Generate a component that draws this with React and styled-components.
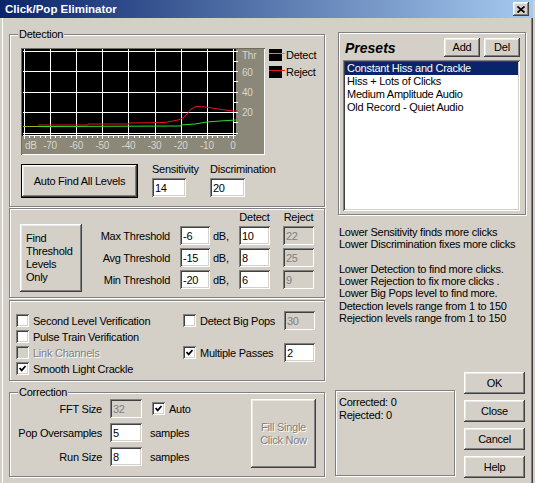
import React from "react"
import styled, { createGlobalStyle, css } from "styled-components"

const FACE = "#d4d0c8"

const GlobalStyle = createGlobalStyle`
  html, body {
    margin: 0;
    padding: 0;
    background: ${FACE};
  }
  body {
    font-family: "Liberation Sans", Arial, sans-serif;
    font-size: 11px;
    letter-spacing: -0.25px;
    color: #000;
  }
`

const raised = css`
  background: ${FACE};
  box-shadow: inset -1px -1px 0 #404040, inset 1px 1px 0 #fff,
    inset -2px -2px 0 #808080, inset 2px 2px 0 #ebe9e4;
`

const sunken = css`
  box-shadow: inset 1px 1px 0 #808080, inset -1px -1px 0 #fff,
    inset 2px 2px 0 #404040, inset -2px -2px 0 ${FACE};
`

const etched = css`
  border: 1px solid #808080;
  box-shadow: inset 1px 1px 0 #fff, 1px 1px 0 #fff;
`

const disabledText = css`
  color: #808080;
  text-shadow: 1px 1px 0 #fff;
`

const Window = styled.div`
  width: 533px;
  height: 483px;
  display: flex;
  flex-direction: column;
  background: ${FACE};
  box-shadow: inset -1px 0 0 #404040, inset -2px 0 0 #808080;
  overflow: hidden;
`

const TitleBar = styled.div`
  height: 18px;
  flex: none;
  display: flex;
  align-items: center;
  justify-content: space-between;
  padding: 0 4px 0 5px;
  background: linear-gradient(90deg, #0a246a, #a6caf0);
  color: #fff;
  font-weight: bold;
  font-size: 11.5px;
  letter-spacing: 0;
`

const CloseButton = styled.button`
  width: 16px;
  height: 14px;
  padding: 0;
  border: none;
  display: flex;
  align-items: center;
  justify-content: center;
  ${raised}
`

const Body = styled.div`
  flex: 1;
  display: flex;
  gap: 9px;
  margin-left: 2px;
  padding-left: 6px;
  border-left: 1px solid #fff;
`

const LeftCol = styled.div`
  width: 317px;
  display: flex;
  flex-direction: column;
`

const RightCol = styled.div`
  width: 192px;
  display: flex;
  flex-direction: column;
  padding-bottom: 5px;
`

const Group = styled.div`
  position: relative;
  box-sizing: border-box;
  width: 316px;
  height: ${p => p.$h}px;
  margin-top: ${p => p.$top}px;
  padding: ${p => p.$pad || 0};
  ${etched}
`

const Caption = styled.span`
  position: absolute;
  top: -7px;
  left: 8px;
  padding: 0 1px;
  line-height: 13px;
  background: ${FACE};
`

const GraphRow = styled.div`
  display: flex;
  gap: 4px;
`

const Legend = styled.div`
  display: flex;
  flex-direction: column;
  gap: 5px;
  margin-top: 1px;
`

const LegendItem = styled.div`
  display: flex;
  align-items: center;
  gap: 1px;
  height: 12px;
`

const ControlRow = styled.div`
  display: flex;
  align-items: flex-start;
  margin-top: 9px;
`

const Button = styled.button`
  box-sizing: border-box;
  width: ${p => p.$w}px;
  height: ${p => p.$h}px;
  padding: 0;
  border: none;
  font: inherit;
  letter-spacing: inherit;
  color: #000;
  line-height: 13px;
  ${raised}
  &:disabled {
    ${disabledText}
  }
`

const DefaultButton = styled(Button)`
  border: 1px solid #000;
  margin-right: 14px;
`

const FindButton = styled(Button)`
  margin-top: 15px;
  text-align: left;
  padding-left: 6px;
`

const Field = styled.div`
  display: flex;
  flex-direction: column;
  gap: 2px;
  width: ${p => (p.$w ? `${p.$w}px` : "auto")};
  margin-top: -1px;
  line-height: 13px;
`

const Input = styled.input`
  box-sizing: border-box;
  width: ${p => p.$w || 31}px;
  height: 19px;
  margin: 0;
  padding: 0 0 0 3px;
  border: none;
  outline: none;
  font: inherit;
  letter-spacing: inherit;
  color: #000;
  background: #fff;
  ${sunken}
  &:disabled {
    background: ${FACE};
    color: #808080;
  }
`

const ThresholdGrid = styled.div`
  display: grid;
  grid-template-columns: 98px 30px 29px 31px 44px;
  grid-template-rows: 13px repeat(3, 19px);
  row-gap: 3px;
  align-items: center;
  margin-top: 1px;
`

const ColHead = styled.span`
  text-align: center;
  grid-column: ${p => p.$col};
  justify-self: ${p => (p.$col === 5 ? "end" : "stretch")};
  width: ${p => (p.$col === 5 ? "31px" : "auto")};
`

const RowLabel = styled.span`
  text-align: right;
  padding-right: 10px;
`

const Unit = styled.span`
  padding-left: 3px;
`

const RejectCell = styled.div`
  justify-self: end;
`

const OptionsGrid = styled.div`
  display: grid;
  grid-template-columns: 167px 132px;
  grid-auto-rows: 13px;
  row-gap: 3px;
  align-items: center;
`

const CheckRow = styled.label`
  display: flex;
  align-items: center;
  gap: 4px;
  height: 13px;
  ${p => p.$disabled && disabledText}
`

const BoxMark = styled.span`
  box-sizing: border-box;
  width: 13px;
  height: 13px;
  flex: none;
  display: inline-flex;
  align-items: center;
  justify-content: center;
  background: ${p => (p.$disabled ? FACE : "#fff")};
  ${sunken}
`

const Trailing = styled.span`
  margin-left: auto;
  display: flex;
`

const CorrRow = styled.div`
  display: flex;
  align-items: flex-start;
`

const CorrGrid = styled.div`
  display: grid;
  grid-template-columns: 92px 32px auto;
  grid-auto-rows: 19px;
  column-gap: 8px;
  row-gap: 5px;
  align-items: center;
`

const AutoCheck = styled(CheckRow)`
  margin-left: 2px;
`

const FillButton = styled(Button)`
  margin-left: auto;
  text-align: center;
`

const PresetsBox = styled.div`
  box-sizing: border-box;
  width: 188px;
  height: 183px;
  margin: 14px 0 0 3px;
  padding: 5px 5px 0 4px;
  ${etched}
`

const PresetsHead = styled.div`
  display: flex;
  align-items: center;
  gap: 4px;
  height: 19px;
`

const PresetsTitle = styled.span`
  margin-left: 2px;
  margin-right: auto;
  font-size: 14px;
  font-weight: bold;
  font-style: italic;
  letter-spacing: 0;
`

const ListBox = styled.div`
  box-sizing: border-box;
  height: 151px;
  margin-top: 3px;
  padding: 2px;
  background: #fff;
  ${sunken}
`

const ListItem = styled.div`
  height: 13px;
  line-height: 13px;
  padding-left: 2px;
  white-space: nowrap;
  background: ${p => (p.$selected ? "#0a246a" : "transparent")};
  color: ${p => (p.$selected ? "#fff" : "#000")};
`

const HelpText = styled.div`
  margin-top: 11px;
  padding-left: 4px;
  line-height: 12.3px;
  white-space: nowrap;
`

const BottomRow = styled.div`
  margin-top: auto;
  display: flex;
  align-items: flex-end;
`

const StatusBox = styled.div`
  box-sizing: border-box;
  width: 120px;
  height: 86px;
  margin-bottom: 2px;
  padding: 5px 3px;
  line-height: 13px;
  ${etched}
`

const ButtonStack = styled.div`
  display: flex;
  flex-direction: column;
  gap: 6px;
  margin-left: 9px;
`

// chart scales: dB along x, threshold along y (coords relative to the frame)
const X = db => 29 + (db + 70) * 2.614
const Y = t => 84.5 - t * 1.025

const Chart = () => {
  const dbTicks = [-70, -60, -50, -40, -30, -20, -10, 0]
  const minor = []
  for (let d = -80; d <= 0; d += 2) minor.push(d)
  const green = "2,78.5 17,78.5"
  const greenLine = "17,78.5 160,78 160,77 174,76 186,74 199,73 215,72"
  const redLine =
    "17,77 67,77 67,76 108,76 108,75 144,74.5 157,72 162,70 166,66 170,61 175,58.5 185,59 201,61.5 212,63 217,63"
  return (
    <svg width="244" height="107" viewBox="0 0 244 107" style={{ flex: "none" }}>
      <rect x="0" y="0" width="244" height="107" fill="#8b887a" />
      <path d="M0 106.5H244M243.5 0V107" stroke="#fff" />
      <path d="M0 0.5H244M0.5 0V107" stroke="#6f6c60" />
      <rect x="1" y="1" width="214" height="87" fill="#000" />
      {[0, 20, 40, 60, 80].map(t => (
        <path key={t} d={`M2 ${Math.round(Y(t)) + 0.5}H217`} stroke="#fff" />
      ))}
      {[-80, ...dbTicks].map(d => (
        <path key={d} d={`M${Math.round(X(d)) + 0.5} 1V88`} stroke="#fff" />
      ))}
      <path d="M2 87.5H215" stroke="#fff" />
      {minor.map(d => (
        <path key={d} d={`M${Math.round(X(d)) + 0.5} 87V${d % 10 === 0 ? 91 : 90}`} stroke="#fff" />
      ))}
      {[0, 10, 20, 30, 40, 50, 60, 70, 80].map(t => (
        <path key={t} d={`M213 ${Math.round(Y(t)) + 0.5}H217`} stroke="#fff" />
      ))}
      <g fontFamily="Liberation Sans, Arial, sans-serif" fontSize="10" fill="#d8d5cc">
        <text x="221" y="11">Thr</text>
        <text x="221" y="28">60</text>
        <text x="221" y="48">40</text>
        <text x="221" y="68">20</text>
        <text x="4" y="101">dB</text>
        {dbTicks.map(d => (
          <text key={d} x={X(d)} y="101" textAnchor="middle">
            {d}
          </text>
        ))}
      </g>
      <polyline points={green} fill="none" stroke="#b0a820" />
      <polyline points={greenLine} fill="none" stroke="#2ee02e" />
      <polyline points={redLine} fill="none" stroke="#e8102a" />
    </svg>
  )
}

const Swatch = ({ color }) => (
  <svg width="16" height="12" viewBox="0 0 16 12">
    <rect x="0" y="0" width="13" height="12" fill="#000" />
    <path d="M0 4.5H16" stroke={color} />
  </svg>
)

const Check = ({ on, disabled, children, as }) => (
  <CheckRow $disabled={disabled} as={as}>
    <BoxMark $disabled={disabled}>
      {on && (
        <svg width="7" height="7" viewBox="0 0 7 7">
          <path d="M0.5 3L2.7 5.3L6.5 1" fill="none" stroke="#000" strokeWidth="1.8" />
        </svg>
      )}
    </BoxMark>
    {children}
  </CheckRow>
)

const thresholds = [
  { label: "Max Threshold", db: "-6", detect: "10", reject: "22" },
  { label: "Avg Threshold", db: "-15", detect: "8", reject: "25" },
  { label: "Min Threshold", db: "-20", detect: "6", reject: "9" },
]

const presets = [
  "Constant Hiss and Crackle",
  "Hiss + Lots of Clicks",
  "Medium Amplitude Audio",
  "Old Record - Quiet Audio",
]

const help = [
  "Lower Sensitivity finds more clicks",
  "Lower Discrimination fixes more clicks",
  "",
  "Lower Detection to find more clicks.",
  "Lower Rejection to fix more clicks .",
  "Lower Big Pops level to find more.",
  "Detection levels range from 1 to 150",
  "Rejection levels range from 1 to 150",
]

export default function App() {
  return (
    <>
      <GlobalStyle />
      <Window>
        <TitleBar>
          <span>Click/Pop Eliminator</span>
          <CloseButton aria-label="Close">
            <svg width="8" height="7" viewBox="0 0 8 7">
              <path d="M0.5 0.5L7.5 6.5M7.5 0.5L0.5 6.5" stroke="#000" strokeWidth="1.7" />
            </svg>
          </CloseButton>
        </TitleBar>
        <Body>
          <LeftCol>
            <Group $top={16} $h={173} $pad="13px 0 0 11px">
              <Caption>Detection</Caption>
              <GraphRow>
                <Chart />
                <Legend>
                  <LegendItem>
                    <Swatch color="#2ee02e" />
                    Detect
                  </LegendItem>
                  <LegendItem>
                    <Swatch color="#e8102a" />
                    Reject
                  </LegendItem>
                </Legend>
              </GraphRow>
              <ControlRow>
                <DefaultButton $w={117} $h={34}>Auto Find All Levels</DefaultButton>
                <Field $w={58}>
                  Sensitivity
                  <Input $w={34} defaultValue="14" />
                </Field>
                <Field>
                  Discrimination
                  <Input $w={35} defaultValue="20" />
                </Field>
              </ControlRow>
            </Group>

            <Group $top={1} $h={90} $pad="0 0 0 10px">
              <CorrRow>
                <FindButton $w={62} $h={68}>
                  Find
                  <br />
                  Threshold
                  <br />
                  Levels
                  <br />
                  Only
                </FindButton>
                <ThresholdGrid>
                  <ColHead $col={4}>Detect</ColHead>
                  <ColHead $col={5}>Reject</ColHead>
                  {thresholds.map(t => (
                    <React.Fragment key={t.label}>
                      <RowLabel>{t.label}</RowLabel>
                      <Input $w={30} defaultValue={t.db} />
                      <Unit>dB,</Unit>
                      <Input $w={31} defaultValue={t.detect} />
                      <RejectCell>
                        <Input $w={31} defaultValue={t.reject} disabled />
                      </RejectCell>
                    </React.Fragment>
                  ))}
                </ThresholdGrid>
              </CorrRow>
            </Group>

            <Group $top={2} $h={81} $pad="13px 0 0 6px">
              <OptionsGrid>
                <Check>Second Level Verification</Check>
                <Check>
                  Detect Big Pops
                  <Trailing>
                    <Input $w={31} defaultValue="30" disabled />
                  </Trailing>
                </Check>
                <Check>Pulse Train Verification</Check>
                <span />
                <Check disabled>Link Channels</Check>
                <Check on>
                  Multiple Passes
                  <Trailing>
                    <Input $w={31} defaultValue="2" />
                  </Trailing>
                </Check>
                <Check on>Smooth Light Crackle</Check>
                <span />
              </OptionsGrid>
            </Group>

            <Group $top={11} $h={85} $pad="6px 8px 0 0">
              <Caption>Correction</Caption>
              <CorrRow>
                <CorrGrid>
                  <RowLabel as="span" style={{ paddingRight: 0 }}>FFT Size</RowLabel>
                  <Input $w={32} defaultValue="32" disabled />
                  <AutoCheck as="div">
                    <BoxMark>
                      <svg width="7" height="7" viewBox="0 0 7 7">
                        <path d="M0.5 3L2.7 5.3L6.5 1" fill="none" stroke="#000" strokeWidth="1.8" />
                      </svg>
                    </BoxMark>
                    Auto
                  </AutoCheck>
                  <RowLabel as="span" style={{ paddingRight: 0 }}>Pop Oversamples</RowLabel>
                  <Input $w={32} defaultValue="5" />
                  <span>samples</span>
                  <RowLabel as="span" style={{ paddingRight: 0 }}>Run Size</RowLabel>
                  <Input $w={32} defaultValue="8" />
                  <span>samples</span>
                </CorrGrid>
                <FillButton $w={65} $h={69} disabled>
                  Fill Single
                  <br />
                  Click Now
                </FillButton>
              </CorrRow>
            </Group>
          </LeftCol>

          <RightCol>
            <PresetsBox>
              <PresetsHead>
                <PresetsTitle>Presets</PresetsTitle>
                <Button $w={36} $h={19}>Add</Button>
                <Button $w={36} $h={19}>Del</Button>
              </PresetsHead>
              <ListBox>
                {presets.map((p, i) => (
                  <ListItem key={p} $selected={i === 0}>
                    {p}
                  </ListItem>
                ))}
              </ListBox>
            </PresetsBox>

            <HelpText>
              {help.map((line, i) => (
                <div key={i}>{line || "\u00a0"}</div>
              ))}
            </HelpText>

            <BottomRow>
              <StatusBox>
                Corrected: 0
                <br />
                Rejected: 0
              </StatusBox>
              <ButtonStack>
                <Button $w={61} $h={22}>OK</Button>
                <Button $w={61} $h={22}>Close</Button>
                <Button $w={61} $h={22}>Cancel</Button>
                <Button $w={61} $h={22}>Help</Button>
              </ButtonStack>
            </BottomRow>
          </RightCol>
        </Body>
      </Window>
    </>
  )
}
